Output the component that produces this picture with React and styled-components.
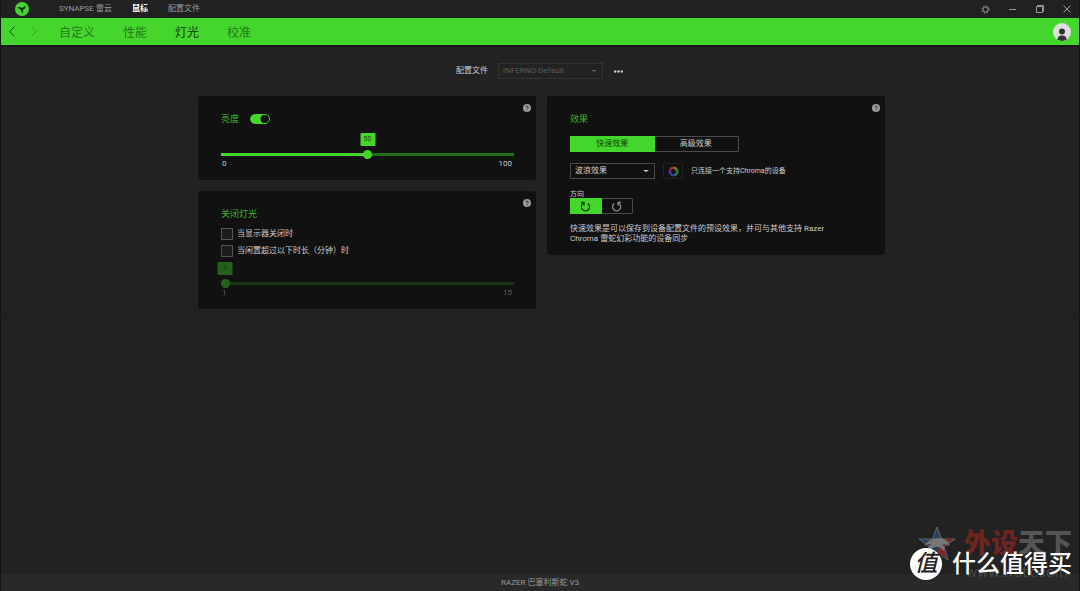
import { useState } from 'react'
import styled, { createGlobalStyle } from 'styled-components'

const GREEN = '#44d62c'

function HelpIcon() {
  return (
    <svg width="8" height="8" viewBox="0 0 8 8">
      <circle cx="4" cy="4" r="4" fill="#9c9c9c" />
      <path d="M2.9 3.1a1.1 1.1 0 1 1 1.7 1c-.4.3-.6.4-.6.9" fill="none" stroke="#222" strokeWidth="0.9" />
      <circle cx="4" cy="6.1" r="0.5" fill="#222" />
    </svg>
  )
}

function LogoIcon() {
  return (
    <svg width="14" height="14" viewBox="0 0 14 14">
      <circle cx="7" cy="7" r="7" fill={GREEN} />
      <path
        d="M2.6 5.2Q4.6 4.4 6.4 5.8Q8.6 5.6 10.6 3.4Q11 6.4 8.4 7.4Q7.6 9 8.2 11.4Q5.8 10.4 6 7.8Q4 7.6 2.6 5.2Z"
        fill="#1b2b18"
      />
    </svg>
  )
}

function RotateIcon({ flip }) {
  return (
    <svg width="11" height="11" viewBox="0 0 10 10" fill="none" stroke="currentColor" strokeWidth="1.2">
      {flip ? (
        <path d="M2.8 2.4A3.7 3.7 0 1 0 7 2.2M9.2 1.2H6.4V4" />
      ) : (
        <path d="M7.2 2.4A3.7 3.7 0 1 1 3 2.2M.8 1.2H3.6V4" />
      )}
    </svg>
  )
}

function ChromaIcon() {
  const colors = ['#8a8524', '#32802b', '#237878', '#2a429a', '#6b2a90', '#9a2a42']
  return (
    <svg width="11" height="11" viewBox="-6 -6 12 12" fill="none" strokeWidth="2.8">
      {colors.map((color, i) => (
        <path key={color} d="M0 -4A4 4 0 0 1 3.46 -2" stroke={color} transform={`rotate(${i * 60})`} />
      ))}
    </svg>
  )
}

function Slider({ label, min, max, value, onChange, disabled }) {
  const percent = ((value - min) / (max - min)) * 100
  return (
    <SliderBox $disabled={disabled}>
      <BubbleRail>
        <Bubble style={{ left: `${percent}%` }}>{value}</Bubble>
      </BubbleRail>
      <Range
        type="range"
        aria-label={label}
        min={min}
        max={max}
        value={value}
        disabled={disabled}
        onChange={(e) => onChange(Number(e.target.value))}
        style={{ '--fill': `${percent}%` }}
      />
      <Limits>
        <span>{min}</span>
        <span>{max}</span>
      </Limits>
    </SliderBox>
  )
}

function TitleBar() {
  return (
    <Title>
      <LogoIcon />
      <TitleLinks>
        <TitleLink href="#synapse">SYNAPSE 雷云</TitleLink>
        <TitleLink href="#mouse" $active>
          鼠标
        </TitleLink>
        <TitleLink href="#profiles">配置文件</TitleLink>
      </TitleLinks>
      <WindowButtons>
        <IconButton aria-label="设置">
          <svg width="9" height="9" viewBox="0 0 9 9" fill="none" stroke="currentColor">
            <circle cx="4.5" cy="4.5" r="2.6" strokeWidth="1" />
            <circle cx="4.5" cy="4.5" r="3.6" strokeWidth="1" strokeDasharray="1.4 1.427" />
          </svg>
        </IconButton>
        <IconButton aria-label="最小化">
          <svg width="7" height="7" viewBox="0 0 7 7" fill="none" stroke="currentColor">
            <path d="M0 3.5H7" />
          </svg>
        </IconButton>
        <IconButton aria-label="还原">
          <svg width="8" height="8" viewBox="0 0 8 8" fill="none" stroke="currentColor">
            <path d="M.5 1.5H6.5V7.5H.5ZM1.5 1.5V.5H7.5V6.5H6.5" />
          </svg>
        </IconButton>
        <IconButton aria-label="关闭">
          <svg width="8" height="8" viewBox="0 0 8 8" fill="none" stroke="currentColor">
            <path d="M.5 .5L7.5 7.5M7.5 .5L.5 7.5" />
          </svg>
        </IconButton>
      </WindowButtons>
    </Title>
  )
}

function NavBar() {
  return (
    <Nav>
      <Arrow aria-label="后退">
        <svg width="6" height="11" viewBox="0 0 6 11" fill="none" stroke="currentColor">
          <path d="M5.5 .5L.8 5.5L5.5 10.5" />
        </svg>
      </Arrow>
      <Arrow aria-label="前进" disabled>
        <svg width="6" height="11" viewBox="0 0 6 11" fill="none" stroke="currentColor">
          <path d="M.5 .5L5.2 5.5L.5 10.5" />
        </svg>
      </Arrow>
      <NavLinks>
        <NavLink href="#custom">自定义</NavLink>
        <NavLink href="#performance">性能</NavLink>
        <NavLink href="#lighting" $active>
          灯光
        </NavLink>
        <NavLink href="#calibration">校准</NavLink>
      </NavLinks>
      <Account aria-label="账户">
        <svg width="18" height="18" viewBox="0 0 18 18">
          <circle cx="9" cy="9" r="9" fill="#dedede" />
          <circle cx="9" cy="8.5" r="3" fill="#333" />
          <path d="M4.5 16.8C4.5 13.5 6.5 12.6 9 12.6S13.5 13.5 13.5 16.8Q9 19 4.5 16.8Z" fill="#333" />
        </svg>
      </Account>
    </Nav>
  )
}

function Watermark() {
  return (
    <Mark>
      <MarkBack>
        <svg width="38" height="36" viewBox="0 0 38 36">
          <path
            d="M19 1L23.4 13H37L26.2 21L30 34L19 26.2L8 34L11.8 21L1 13H14.6Z"
            fill="#24405e"
            stroke="#777"
            strokeWidth="0.8"
          />
          <path d="M23.4 13H36L25.6 21L29 33L19 26.2Z" fill="#7a2a26" />
          <path
            d="M6 20Q12 11 22 12Q30 13 32 20Q27 17 24 19Q28 21 26 25Q22 20 17 21Q11 23 9 30Q8 23 13 18Q9 18 6 20Z"
            fill="#777"
          />
        </svg>
        <MarkName>
          <em>外设</em>天下
        </MarkName>
      </MarkBack>
      <MarkUrl>www.wstx.com</MarkUrl>
      <MarkFront>
        <MarkBadge>值</MarkBadge>
        什么值得买
      </MarkFront>
    </Mark>
  )
}

export default function App() {
  const [lightOn, setLightOn] = useState(true)
  const [brightness, setBrightness] = useState(50)
  const [effectMode, setEffectMode] = useState('quick')
  const [clockwise, setClockwise] = useState(true)

  return (
    <Page>
      <GlobalStyle />
      <TitleBar />
      <NavBar />
      <Main>
        <ProfileRow>
          <label htmlFor="profile">配置文件</label>
          <SelectWrap $width="105px" $muted>
            <Select id="profile" disabled>
              <option>INFERNO-Default</option>
            </Select>
          </SelectWrap>
          <IconButton aria-label="更多">
            <svg width="9" height="3" viewBox="0 0 9 3" fill="#ccc">
              <circle cx="1.2" cy="1.5" r="1.2" />
              <circle cx="4.5" cy="1.5" r="1.2" />
              <circle cx="7.8" cy="1.5" r="1.2" />
            </svg>
          </IconButton>
        </ProfileRow>
        <Cards>
          <Column>
            <Card>
              <Help aria-label="帮助">
                <HelpIcon />
              </Help>
              <Heading>
                <label htmlFor="light">亮度</label>
                <Toggle
                  id="light"
                  type="checkbox"
                  checked={lightOn}
                  onChange={() => setLightOn(!lightOn)}
                />
              </Heading>
              <Slider label="亮度" min={0} max={100} value={brightness} onChange={setBrightness} />
            </Card>
            <Card>
              <Help aria-label="帮助">
                <HelpIcon />
              </Help>
              <Heading>关闭灯光</Heading>
              <Checks>
                <Check>
                  <input type="checkbox" />
                  当显示器关闭时
                </Check>
                <Check>
                  <input type="checkbox" />
                  当闲置超过以下时长（分钟）时
                </Check>
              </Checks>
              <Slider label="闲置时长" min={1} max={15} value={1} disabled />
            </Card>
          </Column>
          <Column>
            <Card>
              <Help aria-label="帮助">
                <HelpIcon />
              </Help>
              <Heading>效果</Heading>
              <ModeTabs>
                <Segment $active={effectMode === 'quick'} onClick={() => setEffectMode('quick')}>
                  快速效果
                </Segment>
                <Segment $active={effectMode === 'advanced'} onClick={() => setEffectMode('advanced')}>
                  高级效果
                </Segment>
              </ModeTabs>
              <EffectRow>
                <SelectWrap $width="85px">
                  <Select aria-label="效果">
                    <option>波浪效果</option>
                  </Select>
                </SelectWrap>
                <ChromaButton aria-label="Chroma">
                  <ChromaIcon />
                </ChromaButton>
                <Hint>只连接一个支持Chroma的设备</Hint>
              </EffectRow>
              <Direction>方向</Direction>
              <Segments $width="63px">
                <Segment aria-label="顺时针" $active={clockwise} onClick={() => setClockwise(true)}>
                  <RotateIcon />
                </Segment>
                <Segment aria-label="逆时针" $active={!clockwise} $dim onClick={() => setClockwise(false)}>
                  <RotateIcon flip />
                </Segment>
              </Segments>
              <Note>
                快速效果是可以保存到设备配置文件的预设效果，并可与其他支持 Razer Chroma
                雷蛇幻彩功能的设备同步
              </Note>
            </Card>
          </Column>
        </Cards>
      </Main>
      <Footer>RAZER 巴塞利斯蛇 V3</Footer>
      <Watermark />
    </Page>
  )
}

const GlobalStyle = createGlobalStyle`
  * {
    box-sizing: border-box;
  }
  body {
    margin: 0;
    background: #222;
    color: #ccc;
    font: 8px/10px Roboto, 'Noto Sans CJK SC', sans-serif;
  }
  button, select, input {
    font: inherit;
    color: inherit;
    margin: 0;
    padding: 0;
  }
  button {
    background: none;
    border: 0;
  }
  a {
    text-decoration: none;
  }
`
const Page = styled.div`
  min-height: 100vh;
  display: flex;
  flex-direction: column;
  position: relative;
  border: solid #141414;
  border-width: 0 1px;
`
const Title = styled.header`
  height: 18px;
  display: flex;
  align-items: center;
  padding: 0 7px 0 14px;
  background: #212121;
`
const TitleLinks = styled.nav`
  display: flex;
  gap: 20px;
  margin-left: 30px;
`
const TitleLink = styled.a`
  color: ${(p) => (p.$active ? '#fff' : '#999')};
  font-weight: ${(p) => (p.$active ? 700 : 400)};
`
const WindowButtons = styled.div`
  display: flex;
  gap: 16px;
  margin-left: auto;
  color: #999;
`
const IconButton = styled.button`
  display: grid;
  place-items: center;
  width: 11px;
  height: 11px;
`
const Nav = styled.nav`
  height: 27px;
  display: flex;
  align-items: center;
  gap: 16px;
  padding: 0 8px;
  background: ${GREEN};
`
const Arrow = styled.button`
  display: flex;
  color: #1c4d15;

  &:disabled {
    color: #2fa01e;
  }
`
const NavLinks = styled.div`
  display: flex;
  gap: 28px;
  margin-left: 6px;
  padding-top: 2px;
`
const NavLink = styled.a`
  font-size: 12px;
  line-height: 16px;
  color: ${(p) => (p.$active ? '#12360c' : '#267a1a')};
`
const Account = styled.button`
  display: flex;
  margin-left: auto;
`
const Main = styled.main`
  flex: 1;
  border-top: 2px solid #1a1718;
  padding-top: 16px;
`
const ProfileRow = styled.div`
  display: flex;
  justify-content: center;
  align-items: center;
  gap: 10px;
  height: 16px;
`
const SelectWrap = styled.span`
  position: relative;
  display: block;
  width: ${(p) => p.$width};
  color: ${(p) => (p.$muted ? '#5c5c5c' : '#ccc')};
  border: 1px solid ${(p) => (p.$muted ? '#333' : '#4a4a4a')};

  &::after {
    content: '';
    position: absolute;
    right: 5px;
    top: 6px;
    border: solid transparent;
    border-width: 2px 3px 0;
    border-top-color: currentColor;
    pointer-events: none;
  }
`
const Select = styled.select`
  display: block;
  appearance: none;
  width: 100%;
  height: 14px;
  padding: 0 4px;
  background: transparent;
  border: 0;
  opacity: 1;
`
const Cards = styled.div`
  display: grid;
  grid-template-columns: repeat(2, minmax(0, 338px));
  justify-content: center;
  align-items: start;
  gap: 11px;
  margin-top: 17px;
  padding: 0 9px 6px 12px;
  border-bottom: 1px solid #1e1e1e;
`
const Column = styled.div`
  display: grid;
  gap: 11px;
`
const Card = styled.section`
  position: relative;
  padding: 16px 22px 11px 23px;
  background: #111;
  border-radius: 3px;
`
const Help = styled.button`
  position: absolute;
  top: 8px;
  right: 5px;
  display: flex;
`
const Heading = styled.h2`
  display: flex;
  align-items: center;
  gap: 11px;
  margin: 0;
  font-size: 9px;
  line-height: 14px;
  font-weight: 400;
  color: #3db52a;
`
const Toggle = styled.input`
  appearance: none;
  width: 20px;
  height: 10px;
  border-radius: 5px;
  border: 1px solid ${GREEN};
  background: radial-gradient(circle at ${(p) => (p.checked ? '14px' : '4px')} 4px, #111 4px, ${GREEN} 5px);
`
const SliderBox = styled.div`
  margin-top: ${(p) => (p.$disabled ? 5 : 7)}px;
  opacity: ${(p) => (p.$disabled ? 0.4 : 1)};
`
const BubbleRail = styled.div`
  position: relative;
  height: 13px;
  margin: 0 4px;
`
const Bubble = styled.output`
  position: absolute;
  transform: translateX(-50%);
  width: 15px;
  line-height: 13px;
  text-align: center;
  font-size: 7px;
  color: #17490f;
  background: ${GREEN};
  border-radius: 1px;
`
const Range = styled.input`
  appearance: none;
  display: block;
  width: 100%;
  height: 9px;
  margin-top: 4px;
  background: linear-gradient(to right, ${GREEN} var(--fill), #23701a var(--fill)) center / 100% 3px no-repeat;

  &::-webkit-slider-thumb {
    appearance: none;
    width: 9px;
    height: 9px;
    border-radius: 50%;
    background: ${GREEN};
  }
`
const Limits = styled.div`
  display: flex;
  justify-content: space-between;
  padding: 0 2px 0 1px;
`
const Checks = styled.div`
  display: grid;
  gap: 5px;
  margin-top: 7px;
`
const Check = styled.label`
  display: flex;
  align-items: center;
  gap: 4px;
  line-height: 12px;

  input {
    appearance: none;
    width: 12px;
    height: 12px;
    background: #1c1c1c;
    border: 1px solid #555;
  }
`
const Segments = styled.div`
  display: flex;
  width: ${(p) => p.$width};
  height: 16px;
  border: 1px solid #4a4a4a;
  border-radius: 1px;
`
const ModeTabs = styled(Segments)`
  width: 169px;
  margin-top: 10px;
`
const Segment = styled.button`
  flex: 1;
  display: grid;
  place-items: center;
  margin: -1px 0 -1px -1px;
  color: ${(p) => (p.$active ? '#123d0b' : p.$dim ? '#888' : '#ccc')};
  background: ${(p) => (p.$active ? GREEN : 'transparent')};
`
const EffectRow = styled.div`
  display: flex;
  align-items: center;
  gap: 8px;
  margin-top: 11px;
`
const ChromaButton = styled.button`
  display: grid;
  place-items: center;
  width: 20px;
  height: 16px;
  border: 1px solid #222;
  border-radius: 2px;
`
const Hint = styled.span`
  font-size: 7px;
`
const Direction = styled.div`
  margin-top: 11px;
  font-size: 7px;
  line-height: 8px;
`
const Note = styled.p`
  margin: 10px 0 0;
  max-width: 260px;
`
const Footer = styled.footer`
  height: 17px;
  line-height: 17px;
  text-align: center;
  color: #999;
  background: #292929;
`
const Mark = styled.div`
  position: absolute;
  right: 9px;
  bottom: 11px;
  width: 160px;
  height: 54px;
`
const MarkBack = styled.div`
  display: flex;
  align-items: center;
  gap: 8px;
  padding-left: 8px;

  svg {
    flex-shrink: 0;
  }
`
const MarkName = styled.strong`
  white-space: nowrap;
  font-size: 27px;
  line-height: 36px;
  font-weight: 900;
  color: #555;

  em {
    font-style: normal;
    color: #6e2420;
  }
`
const MarkUrl = styled.span`
  position: absolute;
  left: 56px;
  bottom: 0;
  font-size: 15px;
  line-height: 16px;
  color: #484848;
`
const MarkFront = styled.div`
  position: absolute;
  left: 0;
  bottom: 0;
  display: flex;
  align-items: center;
  gap: 10px;
  white-space: nowrap;
  font-size: 24px;
  line-height: 32px;
  font-weight: 500;
  color: #fff;
`
const MarkBadge = styled.span`
  width: 32px;
  height: 32px;
  border-radius: 50%;
  text-align: center;
  font-size: 23px;
  font-style: italic;
  color: #222;
  background: #fff;
`
